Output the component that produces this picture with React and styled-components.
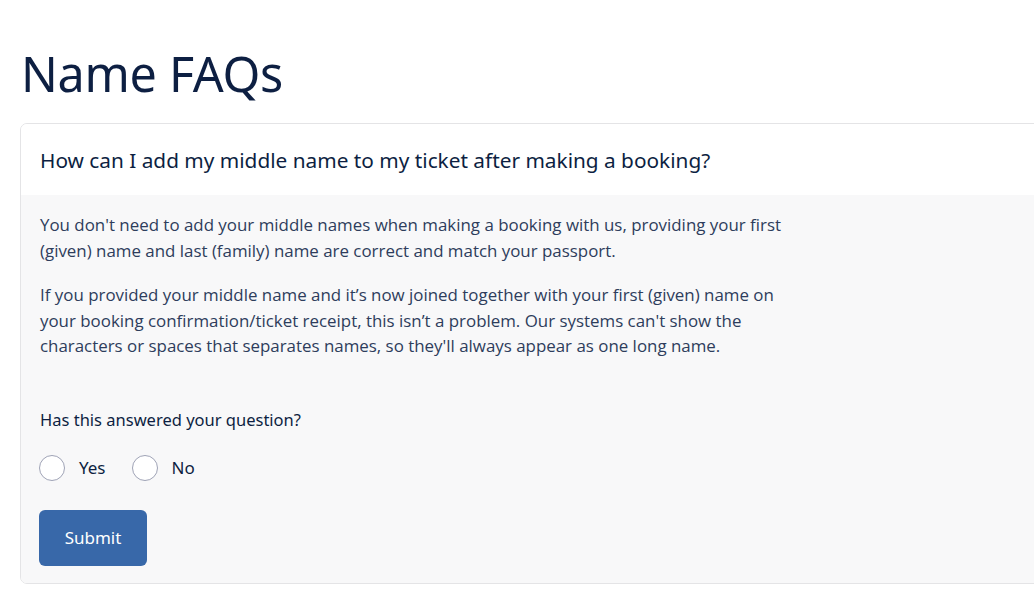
import React, { useState } from 'react'
import styled, { createGlobalStyle } from 'styled-components'

const GlobalStyle = createGlobalStyle`
body{
  margin:0;
  background:#ffffff;
  font-family:"Open Sans", sans-serif;
}
`

function App() {
  const [answer, setAnswer] = useState(null)

  return (
    <Page>
      <GlobalStyle />
      <Title>Name FAQs</Title>
      <Card>
        <Question>How can I add my middle name to my ticket after making a booking?</Question>
        <Answer>
          <p>You don't need to add your middle names when making a booking with us, providing your first (given) name and last (family) name are correct and match your passport.</p>
          <p>If you provided your middle name and it’s now joined together with your first (given) name on your booking confirmation/ticket receipt, this isn’t a problem. Our systems can't show the characters or spaces that separates names, so they'll always appear as one long name.</p>
          <Feedback>
            <Label>Has this answered your question?</Label>
            <Options>
              <Option>
                <Radio checked={answer === 'yes'} onClick={() => setAnswer('yes')} />
                Yes
              </Option>
              <Option>
                <Radio checked={answer === 'no'} onClick={() => setAnswer('no')} />
                No
              </Option>
            </Options>
            <Submit>Submit</Submit>
          </Feedback>
        </Answer>
      </Card>
    </Page>
  )
}

export default App

const Page=styled.div`
padding:43px 0 0 20px;
overflow:hidden;
`
const Title=styled.h1`
margin:0 0 20px 1px;
font-family:"Noto Sans", sans-serif;
font-weight:400;
font-size:48.5px;
line-height:60px;
color:#0d1f42;
letter-spacing:-0.3px;
`
const Card=styled.div`
margin-right:-20px;
border:1px solid #e4e4e6;
border-radius:7px;
overflow:hidden;
`
const Question=styled.div`
background:#fff;
padding:22px 19px 21px;
font-family:"Noto Sans", sans-serif;
font-size:20.8px;
line-height:28px;
color:#0d1f42;
`
const Answer=styled.div`
background:#f8f8f9;
padding:17px 19px 17px;
color:#2e3d5c;
p{
  max-width:760px;
  margin:0 0 19px;
  font-size:16.9px;
  line-height:25.5px;
}
`
const Feedback=styled.div`
padding-top:30px;
display:flex;
flex-direction:column;
align-items:flex-start;
`
const Label=styled.div`
font-family:"Noto Sans", sans-serif;
font-size:16.5px;
line-height:24px;
color:#0d1f42;
`
const Options=styled.div`
display:flex;
gap:27px;
margin-top:23px;
`
const Option=styled.label`
display:flex;
align-items:center;
gap:14px;
font-family:"Noto Sans", sans-serif;
font-size:17px;
color:#0d1f42;
cursor:pointer;
`
const Radio=styled.span`
margin-left:-1px;
width:24px;
height:24px;
border-radius:50%;
border:1px solid #9fa3b6;
background:#fff;
box-shadow:${p => p.checked ? 'inset 0 0 0 6px #3868a8' : 'none'};
`
const Submit=styled.button`
margin:29px 0 0 -1px;
width:108px;
height:56px;
border:none;
border-radius:6px;
background:#3868a9;
color:#fff;
font-family:"Noto Sans", sans-serif;
font-size:17px;
cursor:pointer;
`
